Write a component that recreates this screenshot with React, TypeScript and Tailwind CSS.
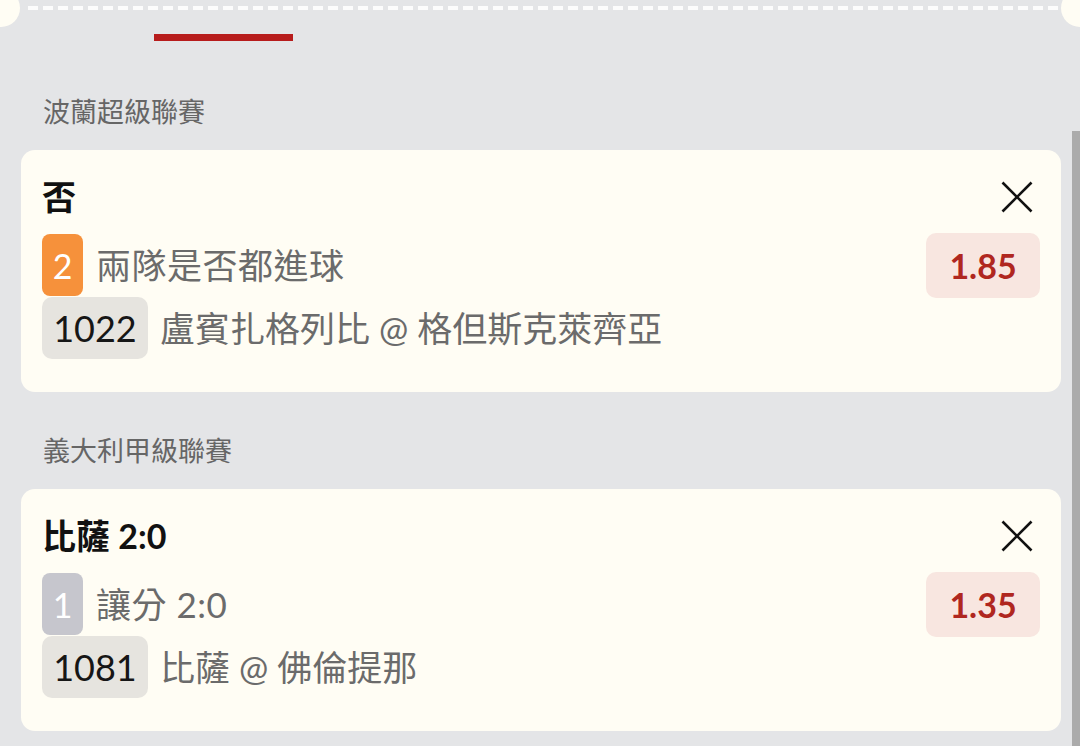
import React from 'react';

type Bet = {
    league: string;
    title: string;
    leg: string;
    legColor: string;
    market: string;
    code: string;
    match: string;
    odds: string;
};

const bets: Bet[] = [
    {
        league: '波蘭超級聯賽',
        title: '否',
        leg: '2',
        legColor: 'bg-[#f6913b]',
        market: '兩隊是否都進球',
        code: '1022',
        match: '盧賓扎格列比 @ 格但斯克萊齊亞',
        odds: '1.85',
    },
    {
        league: '義大利甲級聯賽',
        title: '比薩 2:0',
        leg: '1',
        legColor: 'bg-[#c6c6cd]',
        market: '讓分 2:0',
        code: '1081',
        match: '比薩 @ 佛倫提那',
        odds: '1.35',
    },
];

const CloseIcon = () => (
    <svg width="32" height="32" viewBox="0 0 32 32" className="mr-[7px]">
        <line x1="1.5" y1="1.5" x2="30.5" y2="30.5" stroke="#111" strokeWidth="2.6" />
        <line x1="30.5" y1="1.5" x2="1.5" y2="30.5" stroke="#111" strokeWidth="2.6" />
    </svg>
);

const BetCard: React.FC<{ bet: Bet }> = ({ bet }) => {
    return (
        <div className="ml-[21px] mr-[19px] rounded-[14px] bg-[#fffdf4] pt-[23px] pb-[33px] pl-[21px] pr-[21px]">
            <div className="flex h-[48px] items-center justify-between">
                <h2 className="text-[34px] font-bold text-[#111] leading-none">{bet.title}</h2>
                <CloseIcon />
            </div>
            <div className="mt-[13px] flex items-start justify-between">
                <div className="flex flex-col gap-px">
                    <div className="flex h-[62px] items-center gap-[13px]">
                        <span className={`flex h-[62px] w-[41px] items-center justify-center rounded-[8px] ${bet.legColor} text-[34px] text-white`}>
                            {bet.leg}
                        </span>
                        <span className="text-[35px] tracking-[0.5px] text-[#6b6b6b]">{bet.market}</span>
                    </div>
                    <div className="flex h-[62px] items-center gap-[12px]">
                        <span className="flex h-[62px] w-[106px] items-center justify-center rounded-[10px] bg-[#e6e4df] text-[36px] text-[#161616]">
                            {bet.code}
                        </span>
                        <span className="text-[35px] text-[#6b6b6b]">{bet.match}</span>
                    </div>
                </div>
                <div className="-mt-px flex h-[65px] w-[114px] items-center justify-center rounded-[10px] bg-[#f8e6e0] text-[34px] font-bold text-[#b0271f]">
                    {bet.odds}
                </div>
            </div>
        </div>
    );
};

const App: React.FC = () => {
    return (
        <div className="relative h-[746px] w-[1080px] overflow-hidden bg-[#e4e5e7] font-['Lato','Noto_Sans_CJK_TC',sans-serif]">
            {/* ticket edge */}
            <div className="relative h-[28px]">
                <div className="absolute left-[-18px] top-[-11px] h-[38px] w-[38px] rounded-full bg-[#fffdf4]" />
                <div className="absolute right-[-19px] top-[-11px] h-[38px] w-[38px] rounded-full bg-[#fffdf4]" />
                <div className="absolute left-[28px] right-[22px] top-[6px] h-[4px] bg-[repeating-linear-gradient(90deg,#fcfcfc_0_10px,transparent_10px_15px)]" />
            </div>

            {/* active tab underline */}
            <div className="ml-[154px] mt-[6px] h-[7px] w-[139px] bg-[#b71c1c]" />

            <div className="flex flex-col">
                {bets.map((bet, i) => (
                    <section key={bet.code}>
                        <p className={`${i === 0 ? 'mt-[53px]' : 'mt-[41px]'} mb-[20px] pl-[43px] text-[27px] leading-[36px] text-[#666]`}>
                            {bet.league}
                        </p>
                        <BetCard bet={bet} />
                    </section>
                ))}
            </div>

            {/* scrollbar thumb */}
            <div className="absolute bottom-0 right-0 top-[131px] w-[8px] bg-[#ababab]" />
        </div>
    );
};

export default App;
